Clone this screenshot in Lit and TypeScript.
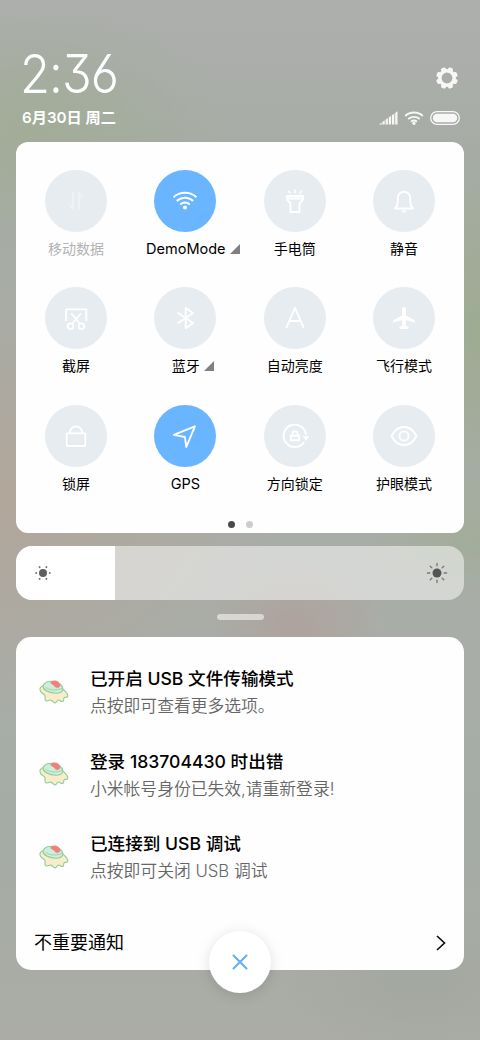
import { LitElement, html, css, svg } from "lit";
import { customElement } from "lit/decorators.js";

const icons: Record<string, unknown> = {
  data: svg`<path d="M13 7v17l-4-5M19 25V8l4 5" opacity=".35"/>`,
  wifi: svg`<path d="M4.500 12.300a17 17 0 0 1 23 0M7.800 16a12 12 0 0 1 16.400 0M11.200 19.400a7.300 7.300 0 0 1 9.600 0" stroke-width="2"/><circle cx="16" cy="22.600" r="2" fill="#fff" stroke="none"/>`,
  torch: svg`<path d="M7.800 11h16.400v2.500c0 3-3.700 3-3.700 5.500v8h-9v-8c0-2.500-3.700-2.500-3.700-5.500zM8 13.500h16" /><path d="M16 4.500v3.500M9.300 5.800l2 2.700M22.700 5.800l-2 2.700" stroke-width="1.500"/>`,
  bell: svg`<path d="M7 23.500c1.800-2 2.700-3.500 2.700-6.500v-4a6.300 6.300 0 0 1 12.600 0v4c0 3 .9 4.500 2.700 6.500z"/><path d="M13.800 26.300h4.400" stroke-width="1.900"/>`,
  shot: svg`<path d="M6 19V7.300h20.300V19M11.300 11.500l9 10.500M21 11.500L12 22"/><circle cx="10.500" cy="24.200" r="2.800"/><circle cx="21.500" cy="24.200" r="2.800"/>`,
  bt: svg`<path d="M8.500 10.500l15.500 10.600-7.300 5.200V5.900l7.300 5.200L8.500 21.600"/>`,
  auto: svg`<path d="M7.200 26L16 5.800 24.800 26M10.300 19h11.400"/>`,
  plane: svg`<path d="M16 5c1.100 0 1.900 1 1.900 2.400v6.100l9 5v2.200l-9-2.800v5.300l2.600 2V27h-9v-1.800l2.600-2v-5.300l-9 2.800v-2.200l9-5V7.400C14.100 6 14.900 5 16 5z" fill="#fff" stroke="none"/>`,
  lock: svg`<rect x="6.700" y="13.300" width="18.600" height="12.700" rx=".8"/><path d="M9.900 13v-.6a6.100 6.100 0 0 1 12.200 0v.6"/>`,
  gps: svg`<path d="M4.800 14.800L25.900 6.300 17.300 27l-1.400-10z"/>`,
  rotate: svg`<path d="M25.200 22A11.200 11.200 0 1 1 27 15"/><path d="M23.800 16.300h6.400L27 21z" fill="#fff" stroke="none"/><path d="M12 15.700h8v4.600h-8z" stroke-width="2.100"/><path d="M13.500 15.300v-1.600a2.500 2.500 0 0 1 5 0v1.600"/>`,
  eye: svg`<path d="M3.500 16c3.300-6 7.500-9 12.500-9s9.200 3 12.500 9c-3.300 6-7.500 9-12.500 9S6.800 22 3.500 16z"/><circle cx="16" cy="16" r="4.600"/>`,
};

const tiles = [
  { icon: "data", label: "移动数据", off: true },
  { icon: "wifi", label: "DemoMode", on: true, more: true, latin: true },
  { icon: "torch", label: "手电筒" },
  { icon: "bell", label: "静音" },
  { icon: "shot", label: "截屏" },
  { icon: "bt", label: "蓝牙", more: true },
  { icon: "auto", label: "自动亮度" },
  { icon: "plane", label: "飞行模式" },
  { icon: "lock", label: "锁屏" },
  { icon: "gps", label: "GPS", on: true, latin: true },
  { icon: "rotate", label: "方向锁定" },
  { icon: "eye", label: "护眼模式" },
];

const notes = [
  ["已开启 USB 文件传输模式", "点按即可查看更多选项。"],
  ["登录 183704430 时出错", "小米帐号身份已失效,请重新登录!"],
  ["已连接到 USB 调试", "点按即可关闭 USB 调试"],
];

const cake = html`<svg class="cake" viewBox="0 0 30 24" fill="none" stroke="#8fce98" stroke-width="1.100" stroke-linejoin="round">
  <path fill="#faeccb" d="M4.500 5.500C1.200 6.200.3 9 1.500 11.300c1 2 3.800 2.400 4.500 4.300.6 1.800-1 4.200.9 5.200 1.900.9 3.100-1 4.900-.7 1.900.3 2.700 2.900 4.300 2.800 1.600-.1 1.700-2.700 3.300-2.900 1.500-.1 2.500 1.900 4.200 1.500 1.600-.4.500-3.100 1.900-3.900 1.200-.6 3 .4 3.300-1.400.3-2-2.200-4.800-4.500-6.700L18 4z"/>
  <path fill="#cdeedb" d="M4.200 5.500C5.500 2.300 10 .9 14.800 1.500c4.600.6 8.600 3.800 9 7 .3 2.900-2.600 4.700-6.700 4.700C10.500 13.200 3.200 10 4.200 5.500z"/>
  <path d="M6.800 7.200c3.200 3 10.400 4 16.400 1" stroke-width=".8"/>
  <path fill="#f08080" stroke="#e59a87" stroke-width=".6" d="M11.500 3.100C12 .9 15 .3 17.500 1.100c2.500.8 4 2.800 3.500 4.900-.4 1.600-2.400 2-4.200 1.600-1-1.700-3-2.900-5.300-4.500z"/>
</svg>`;

const rays = (n: number, a: number, b: number, w: number) =>
  Array.from({ length: n }, (_, i) => {
    const t = (i * 2 * Math.PI) / n;
    const c = Math.cos(t), s = Math.sin(t);
    return svg`<line x1=${12 + a * c} y1=${12 + a * s} x2=${12 + b * c} y2=${12 + b * s} stroke="#777" stroke-width=${w} stroke-linecap="round"/>`;
  });

const teeth = Array.from({ length: 8 }, (_, i) =>
  svg`<rect x="9.500" y="1.100" width="5" height="5" rx="1.500" transform=${`rotate(${i * 45 + 22.5} 12 12)`}/>`);

@customElement("app-root")
export class AppRoot extends LitElement {
  static styles = css`
    :host { display: block; font-family: Inter, "Noto Sans CJK SC", sans-serif; color: #000; }
    * { box-sizing: border-box; }
    svg { display: block; flex: none; }
    .screen {
      height: 1040px; padding: 0 16px; overflow: hidden; display: flex; flex-direction: column;
      background:
        radial-gradient(ellipse 90px 60px at 295px 622px, #b39b9599, #b39b9500),
        radial-gradient(ellipse 190px 130px at 30px 130px, #9fac91b3, #9fac9100),
        radial-gradient(ellipse 90px 200px at 480px 330px, #9aab8dcc, #9aab8d00),
        radial-gradient(ellipse 130px 70px at 480px 540px, #9fac94b3, #9fac9400),
        radial-gradient(ellipse 280px 220px at 0px 500px, #b3a598d9, #b3a59800),
        radial-gradient(ellipse 140px 80px at 420px 980px, #9ca39a88, #9ca39a00),
        linear-gradient(#adafad 0, #a7aca5 15%, #a9ada8 60%, #a5aca5 80%, #abaca6 100%);
    }
    .header { height: 142px; padding: 0 4px 0 6px; display: flex; justify-content: space-between; color: #fff; }
    .time { margin: 42px 0 0 -2px; height: 64px; line-height: 64px; font-weight: 300; font-size: 54px; letter-spacing: -1px; white-space: nowrap; font-feature-settings: "cv09", "ss01"; transform: scaleX(.905); transform-origin: 0 0; width: 96px; }
    .date { height: 24px; line-height: 24px; font-size: 15.200px; font-weight: 600; white-space: nowrap; }
    .status { display: flex; flex-direction: column; align-items: flex-end; padding-top: 66px; }
    .gear { width: 24px; height: 24px; margin-right: 1px; }
    .signals { display: flex; gap: 6px; margin-top: 20px; align-items: center; height: 16px; }
    .card { background: #fffffffc; }
    .toggles { height: 391px; flex: none; border-radius: 12px; padding: 28px 5.300px 0; }
    .grid { display: grid; grid-template-columns: repeat(4, 1fr); grid-auto-rows: 117.300px; }
    .tile { display: flex; flex-direction: column; align-items: center; }
    .disc { width: 62px; height: 62px; border-radius: 50%; background: #e7ecf0; display: grid; place-items: center; }
    .disc.on { background: #6ab5ff; }
    .glyph { width: 34px; height: 34px; fill: none; stroke: #fff; stroke-width: 1.850; stroke-linejoin: round; }
    .label { margin-top: 5px; height: 24px; line-height: 24px; font-size: 14px; display: flex; gap: 4px; align-items: center; white-space: nowrap; }
    .label.latin { font-size: 14.500px; }
    .label.off { color: #b3b3b3; }
    .more { margin-top: 0; }
    .pair { margin-left: 15px; }
    .dots { display: flex; gap: 11px; justify-content: center; margin-top: -1px; }
    .dot { width: 7px; height: 7px; border-radius: 50%; background: #ccc; }
    .dot.now { background: #4a4a4a; }
    .slider { height: 54px; flex: none; margin-top: 12.500px; border-radius: 16px; background: #ffffff80; overflow: hidden; display: flex; justify-content: space-between; align-items: center; padding-right: 15px; }
    .fill { width: 98.700px; height: 54px; background: #fff; display: flex; align-items: center; padding-left: 15px; }
    .sun { width: 24px; height: 24px; }
    .handle { width: 47px; height: 6px; flex: none; margin: 14px auto 0; border-radius: 3px; background: #ffffff88; }
    .notes { height: 333px; flex: none; margin-top: 17.500px; border-radius: 15px; padding: 28px 18px 0; display: flex; flex-direction: column; align-items: stretch; }
    .note { height: 82.700px; display: flex; }
    .cake { width: 30px; height: 24px; margin: 14.500px 21px 0 5px; }
    .title { height: 28px; line-height: 28px; font-size: 17.600px; font-weight: 500; white-space: nowrap; }
    .sub { height: 26px; line-height: 26px; font-size: 16.800px; color: #666; font-weight: 350; white-space: nowrap; }
    .rest { margin-top: 15.500px; height: 28px; display: flex; justify-content: space-between; align-items: center; font-size: 18px; line-height: 28px; }
    .close { width: 62px; height: 62px; flex: none; margin: -39.500px auto 0; border-radius: 50%; background: #fff; box-shadow: 0 2px 14px #0000001f; display: grid; place-items: center; position: relative; }
  `;

  render() {
    return html`<main class="screen">
      <header class="header">
        <div><div class="time">2:36</div><div class="date">6月30日 周二</div></div>
        <div class="status">
          <svg class="gear" viewBox="0 0 24 24" fill="#f7f7f7">${teeth}<circle cx="12" cy="12" r="7.200" fill="none" stroke="#f7f7f7" stroke-width="3.500"/></svg>
          <div class="signals">
            <svg width="19" height="14" viewBox="0 0 19 14" fill="#f7f7f7"><path d="M0 13.500l2.600-2v2zM3.400 10.900l2.300-1.700v4.300H3.400zM6.600 8.700l2.300-1.700v6.500H6.600zM9.800 6.500l2.300-1.700v8.700H9.800zM13 4.300l2.300-1.700v10.900H13zM16.200 2L18.500.3v13.200h-2.300z"/></svg>
            <svg width="20" height="14" viewBox="0 0 20 14" fill="none" stroke="#f7f7f7" stroke-width="1.900"><path d="M1.200 5a12.800 12.800 0 0 1 17.600 0M4.300 8a8.600 8.600 0 0 1 11.400 0M7 10.700a5 5 0 0 1 6 0"/><circle cx="10" cy="12.300" r="1.600" fill="#f7f7f7" stroke="none"/></svg>
            <svg width="30" height="14" viewBox="0 0 30 14"><rect x=".700" y=".700" width="28.600" height="12.600" rx="6.300" fill="none" stroke="#f7f7f7" stroke-width="1.300"/><rect x="2.800" y="2.800" width="24.400" height="8.400" rx="4.200" fill="#f7f7f7"/></svg>
          </div>
        </div>
      </header>
      <section class="card toggles">
        <div class="grid">
          ${tiles.map((t) => html`<div class="tile">
            <div class="disc ${t.on ? "on" : ""}"><svg class="glyph" viewBox="-1 -1 34 34">${icons[t.icon]}</svg></div>
            <div class="label ${t.latin ? "latin" : ""} ${t.off ? "off" : ""} ${t.more ? "pair" : ""}">${t.label}${t.more
              ? html`<svg class="more" width="10" height="10" viewBox="0 0 10 10"><path d="M10 0v10H0z" fill="#808080"/></svg>` : ""}</div>
          </div>`)}
        </div>
        <div class="dots"><i class="dot now"></i><i class="dot"></i></div>
      </section>
      <div class="slider">
        <div class="fill"><svg class="sun" viewBox="0 0 24 24"><circle cx="12" cy="12" r="4" fill="#606060"/>${rays(6, 6.7, 6.8, 1.9)}</svg></div>
        <svg class="sun" viewBox="0 0 24 24"><circle cx="12" cy="12" r="4.500" fill="#555"/>${rays(8, 7.2, 9.6, 1.3)}</svg>
      </div>
      <div class="handle"></div>
      <section class="card notes">
        ${notes.map(([title, sub]) => html`<article class="note">${cake}<div>
          <div class="title">${title}</div><div class="sub">${sub}</div></div></article>`)}
        <div class="rest"><span>不重要通知</span><svg width="10" height="16" viewBox="0 0 10 16" fill="none" stroke="#111" stroke-width="1.700"><path d="M1 1l7.500 7L1 15"/></svg></div>
      </section>
      <div class="close"><svg width="16" height="16" viewBox="0 0 16 16" stroke="#64adf7" stroke-width="2.100" stroke-linecap="round"><path d="M1.500 1.500l13 13M14.500 1.500l-13 13"/></svg></div>
    </main>`;
  }
}
